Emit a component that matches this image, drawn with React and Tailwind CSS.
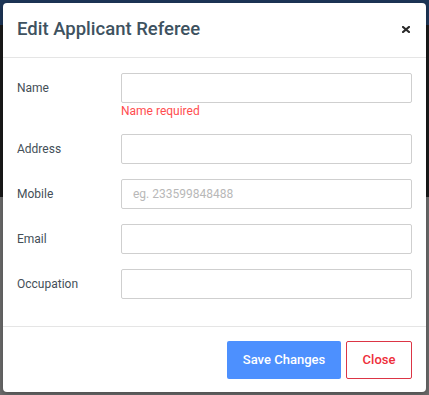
import React from "react";

const fields = [
  { label: "Name", error: "Name required" },
  { label: "Address" },
  { label: "Mobile", placeholder: "eg. 233599848488" },
  { label: "Email" },
  { label: "Occupation" },
];

function Field({ label, placeholder, error }) {
  return (
    <div className="flex items-start">
      <label className="w-[104px] h-[30px] flex items-center text-[12px] text-[#444f57] shrink-0">
        {label}
      </label>
      <div className="flex-1 flex flex-col">
        <input
          type="text"
          placeholder={placeholder}
          className="h-[30px] w-full border border-[#cfcfcf] rounded-[2px] px-[11px] text-[12px] text-[#333] placeholder:text-[#b8b8b8] outline-none"
        />
        {error && (
          <span className="text-[12px] leading-[16px] text-[#ff4d4f]">
            {error}
          </span>
        )}
      </div>
    </div>
  );
}

export default function App() {
  return (
    <div
      className="relative w-[429px] h-[395px] overflow-hidden"
      style={{ fontFamily: "Roboto, 'Liberation Sans', sans-serif" }}
    >
      {/* dimmed page behind the modal */}
      <div className="flex flex-col h-full">
        <div className="h-[25px] bg-[#1d3658]" />
        <div className="h-[172px] bg-[#1a1a1a]" />
        <div className="flex-1 bg-[#6c6c6c]" />
      </div>

      <div className="absolute left-[3px] top-[3px] w-[423px] h-[389px] bg-white rounded-[4px] flex flex-col shadow-[0_2px_6px_rgba(0,0,0,0.3)]">
        <div className="h-[55px] flex items-center justify-between pl-[14px] pr-[16px] border-b border-[#e5e5e5]">
          <h2 className="text-[18.5px] font-medium text-[#3e5260]">
            Edit Applicant Referee
          </h2>
          <button className="mb-[2px]" aria-label="Close">
            <svg width="8" height="7" viewBox="0 0 8 7">
              <path d="M1 1 L7 6 M7 1 L1 6" stroke="#2b2b2b" strokeWidth="2.2" strokeLinecap="square" />
            </svg>
          </button>
        </div>

        <div className="flex flex-col gap-[15px] pl-[14px] pr-[14px] pt-[15px] pb-[27px] border-b border-[#e5e5e5]">
          {fields.map((f) => (
            <Field key={f.label} {...f} />
          ))}
        </div>

        <div className="flex-1 flex justify-end items-start gap-[5px] pt-[14px] pr-[14px]">
          <button className="h-[38px] w-[114px] rounded-[2px] bg-[#4d90fe] text-white text-[13px] font-medium">
            Save Changes
          </button>
          <button className="h-[38px] w-[66px] rounded-[2px] border border-[#dc3545] text-[#ee2e3a] text-[13px] font-medium">
            Close
          </button>
        </div>
      </div>
    </div>
  );
}
